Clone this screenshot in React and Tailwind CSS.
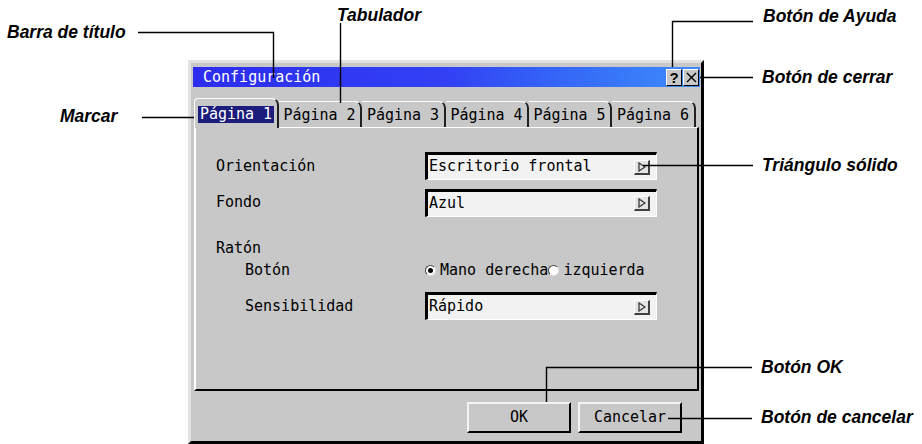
import React from "react";

const mono = "font-['DejaVu_Sans_Mono',monospace] text-[15px] leading-none";

const notes = [
  { text: "Tabulador", cls: "left-[337px] top-[5px]" },
  { text: "Barra de título", cls: "left-[7px] top-[22px]" },
  { text: "Botón de Ayuda", cls: "left-[763px] top-[6px]" },
  { text: "Botón de cerrar", cls: "left-[762px] top-[67px]" },
  { text: "Marcar", cls: "left-[60px] top-[106px]" },
  { text: "Triángulo sólido", cls: "left-[762px] top-[155px]" },
  { text: "Botón OK", cls: "left-[761px] top-[357px]" },
  { text: "Botón de cancelar", cls: "left-[761px] top-[407px]" },
];

const Arrow = () => (
  <div className="w-[16px] h-[15px] bg-[#e4e4e4] border-t border-l border-white border-r-2 border-b-2 border-r-[#404040] border-b-[#404040] flex items-center justify-center">
    <svg width="8" height="10" viewBox="0 0 8 10">
      <polygon points="1,1 7,5 1,9" fill="none" stroke="#303030" strokeWidth="1.2" />
    </svg>
  </div>
);

const Field = ({ value }) => (
  <div className="w-[232px] h-[28px] bg-[#f2f2f2] border-t-[3px] border-l-[3px] border-black border-r border-b border-r-white border-b-white flex items-center justify-between pr-[6px]">
    <span className={`${mono} pl-[1px] -mt-[1px]`}>{value}</span>
    <Arrow />
  </div>
);

const Radio = ({ on }) => (
  <span className="w-[11px] h-[11px] rounded-full bg-white border border-t-[#404040] border-l-[#404040] border-r-[#e0e0e0] border-b-[#e0e0e0] flex items-center justify-center">
    {on && <span className="w-[5px] h-[5px] rounded-full bg-black" />}
  </span>
);

const Tab = ({ label, active, w }) =>
  active ? (
    <div className={`${w} h-[30px] relative z-10 -mb-[1px] bg-[#c8c8c8] border-t border-l border-white border-r-2 border-r-[#202020] rounded-tl-[4px] rounded-tr-[7px] flex items-center justify-center pt-[2px]`}>
      <span className={`${mono} bg-[#1c1c7c] text-white px-[2px] py-[1px]`}>{label}</span>
    </div>
  ) : (
    <div className={`${w} h-[26px] border-t border-white border-r-2 border-r-[#202020] rounded-tr-[7px] flex items-center justify-center pt-[2px]`}>
      <span className={mono}>{label}</span>
    </div>
  );

const Button = ({ label }) => (
  <button className={`${mono} w-[104px] h-[31px] bg-[#c8c8c8] border-t-2 border-l-2 border-[#f4f4f4] border-r-2 border-b-2 border-r-black border-b-black`}>
    {label}
  </button>
);

export default function App() {
  return (
    <div className="relative w-[922px] h-[444px] bg-white overflow-hidden pl-[188px] pt-[60px]">
      {/* ventana */}
      <div className="w-[516px] h-[384px] bg-[#c8c8c8] border-t-[3px] border-l-[3px] border-[#e2e2e2] border-r-[3px] border-b-[3px] border-r-black border-b-black">
        <div className="ml-[2px] mr-[1px] mt-[4px] h-[20px] bg-gradient-to-r from-[#2c2cee] via-[#3340f4] to-[#3f8cfa] flex items-center justify-between">
          <span className={`${mono} text-white pl-[10px] pt-[1px]`}>Configuración</span>
          <div className="flex gap-[1px] pr-[1px]">
            <div className="w-[16px] h-[17px] bg-[#c8c8c8] border-t border-l border-white border-r border-b border-r-black border-b-black flex items-center justify-center text-[15px] font-bold leading-none font-['Liberation_Sans',sans-serif]">
              ?
            </div>
            <div className="w-[16px] h-[17px] bg-[#c8c8c8] border-t border-l border-white border-r border-b border-r-black border-b-black flex items-center justify-center">
              <svg width="11" height="11" viewBox="0 0 11 11">
                <path d="M1 1 L10 10 M10 1 L1 10" stroke="black" strokeWidth="1.4" />
              </svg>
            </div>
          </div>
        </div>

        {/* pestañas */}
        <div className="ml-[3px] mt-[11px] flex items-end h-[29px]">
          <Tab label="Página 1" active w="w-[85px]" />
          <Tab label="Página 2" w="w-[83px]" />
          <Tab label="Página 3" w="w-[84px]" />
          <Tab label="Página 4" w="w-[83px]" />
          <Tab label="Página 5" w="w-[83px]" />
          <Tab label="Página 6" w="w-[84px]" />
        </div>

        <div className="ml-[3px] w-[505px] h-[264px] border-t border-l-2 border-white border-r-2 border-b-2 border-r-black border-b-black pl-[20px] pt-[24px]">
          <div className="flex items-center h-[28px]">
            <span className={`${mono} w-[209px]`}>Orientación</span>
            <Field value="Escritorio frontal" />
          </div>
          <div className="flex items-center h-[29px] mt-[8px]">
            <span className={`${mono} w-[209px]`}>Fondo</span>
            <Field value="Azul" />
          </div>
          <div className="flex items-center h-[20px] mt-[21px]">
            <span className={mono}>Ratón</span>
          </div>
          <div className="flex items-center h-[20px] mt-[2px]">
            <span className={`${mono} w-[209px] pl-[29px]`}>Botón</span>
            <div className="flex items-center">
              <Radio on />
              <span className={`${mono} ml-[4px]`}>Mano derecha</span>
              <Radio />
              <span className={`${mono} ml-[4px]`}>izquierda</span>
            </div>
          </div>
          <div className="flex items-center h-[28px] mt-[12px]">
            <span className={`${mono} w-[209px] pl-[29px]`}>Sensibilidad</span>
            <Field value="Rápido" />
          </div>
        </div>

        <div className="flex justify-end gap-[7px] pr-[19px] mt-[11px]">
          <Button label="OK" />
          <Button label="Cancelar" />
        </div>
      </div>

      {/* líneas de referencia */}
      <svg className="absolute inset-0 pointer-events-none" width="922" height="444">
        <g stroke="black" strokeWidth="1.4" fill="none">
          <polyline points="138,32.5 273.5,32.5 273.5,78" />
          <polyline points="340.5,23 340.5,103" />
          <polyline points="753,21.5 672.5,21.5 672.5,67" />
          <polyline points="700,77.5 753,77.5" />
          <polyline points="142,117.5 202,117.5" />
          <polyline points="643,165.5 753,165.5" />
          <polyline points="752,367.5 546.5,367.5 546.5,402" />
          <polyline points="668,418.5 752,418.5" />
        </g>
      </svg>

      {notes.map((n) => (
        <span
          key={n.text}
          className={`absolute ${n.cls} font-['Liberation_Sans',Arial,sans-serif] italic font-bold text-[17.5px] leading-[20px] text-black whitespace-nowrap`}
        >
          {n.text}
        </span>
      ))}
    </div>
  );
}
